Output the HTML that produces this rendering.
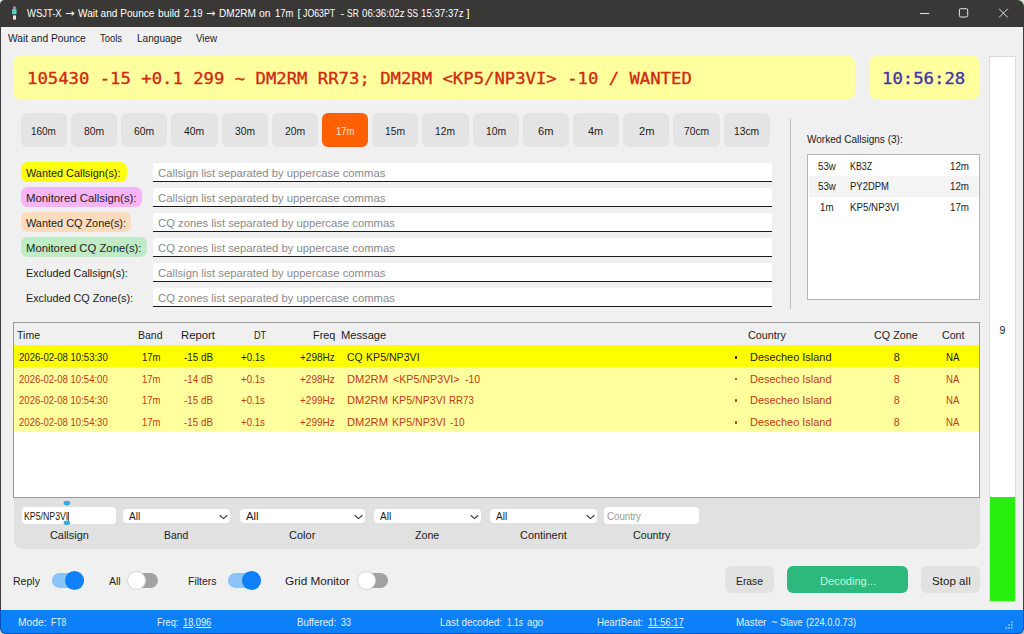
<!DOCTYPE html>
<html lang="en"><head><meta charset="utf-8"><title>WSJT-X Wait and Pounce</title>
<style>
html,body{margin:0;padding:0;}
body{width:1024px;height:634px;overflow:hidden;position:relative;background:#f0f0f0;font-family:"Liberation Sans",sans-serif;}
#w div,#w span,#w svg{position:absolute;}
#w span{white-space:pre;line-height:1;transform-origin:0 0;}
</style></head><body><div id="w">
<div style="left:0px;top:0px;width:1024px;height:26.5px;background:#3a3837;border-radius:0px;"></div>
<div style="left:0px;top:26px;width:1px;height:608px;background:#3f3d3c;border-radius:0px;"></div>
<div style="left:1023px;top:26px;width:1px;height:608px;background:#3f3d3c;border-radius:0px;"></div>
<svg style="left:10px;top:5px" width="10" height="17" viewBox="0 0 10 17"><rect x="3.3" y="1.6" width="2.4" height="2.4" rx="1" fill="#d8a8a0"/><rect x="2" y="4" width="4.6" height="5.2" rx="1" fill="#4fcfd0"/><rect x="3" y="10.2" width="3" height="4.6" rx="1.2" fill="#f4e4dc"/></svg>
<svg style="left:912px;top:0" width="112" height="26" viewBox="0 0 112 26" fill="none" stroke="#e4e4e4" stroke-width="1"><path d="M7.9 13.5h9.3"/><rect x="47.4" y="8.7" width="8.3" height="8.3" rx="1.3"/><path d="M87 8.7l8.8 8.8M95.8 8.7l-8.8 8.8"/></svg>
<svg style="left:1017px;top:0" width="7" height="7" viewBox="0 0 7 7"><path d="M0.5 0H7V6.5A6.5 6.5 0 0 0 0.5 0z" fill="#d3e9cd"/></svg>
<svg style="left:0;top:0" width="5" height="5" viewBox="0 0 5 5"><path d="M0 0H4.5A4.5 4.5 0 0 0 0 4.5z" fill="#e8e4e6"/></svg>
<div style="left:13px;top:56px;width:842px;height:43px;background:#ffff9e;border-radius:7px;"></div>
<div style="left:869px;top:56px;width:110.5px;height:43px;background:#ffff9e;border-radius:8px;"></div>
<div style="left:989px;top:56px;width:26.5px;height:545.5px;background:#ffffff;border-radius:0px;box-sizing:border-box;border:1px solid #dcdce0;"></div>
<div style="left:990px;top:496.6px;width:24.5px;height:104.4px;background:#2aee10;border-radius:0px;"></div>
<div style="left:20.75px;top:113.2px;width:46.2px;height:33.8px;background:#e4e4e4;border-radius:6px;"></div>
<div style="left:70.95px;top:113.2px;width:46.2px;height:33.8px;background:#e4e4e4;border-radius:6px;"></div>
<div style="left:121.15px;top:113.2px;width:46.2px;height:33.8px;background:#e4e4e4;border-radius:6px;"></div>
<div style="left:171.35px;top:113.2px;width:46.2px;height:33.8px;background:#e4e4e4;border-radius:6px;"></div>
<div style="left:221.55px;top:113.2px;width:46.2px;height:33.8px;background:#e4e4e4;border-radius:6px;"></div>
<div style="left:271.75px;top:113.2px;width:46.2px;height:33.8px;background:#e4e4e4;border-radius:6px;"></div>
<div style="left:321.95px;top:113.2px;width:46.2px;height:33.8px;background:#ff6002;border-radius:6px;"></div>
<div style="left:372.15px;top:113.2px;width:46.2px;height:33.8px;background:#e4e4e4;border-radius:6px;"></div>
<div style="left:422.35px;top:113.2px;width:46.2px;height:33.8px;background:#e4e4e4;border-radius:6px;"></div>
<div style="left:472.55px;top:113.2px;width:46.2px;height:33.8px;background:#e4e4e4;border-radius:6px;"></div>
<div style="left:522.75px;top:113.2px;width:46.2px;height:33.8px;background:#e4e4e4;border-radius:6px;"></div>
<div style="left:572.95px;top:113.2px;width:46.2px;height:33.8px;background:#e4e4e4;border-radius:6px;"></div>
<div style="left:623.15px;top:113.2px;width:46.2px;height:33.8px;background:#e4e4e4;border-radius:6px;"></div>
<div style="left:673.35px;top:113.2px;width:46.2px;height:33.8px;background:#e4e4e4;border-radius:6px;"></div>
<div style="left:723.55px;top:113.2px;width:46.2px;height:33.8px;background:#e4e4e4;border-radius:6px;"></div>
<div style="left:20.6px;top:162.2px;width:106.5px;height:19.8px;background:#ffff10;border-radius:6.5px;"></div>
<div style="left:152.5px;top:162.5px;width:619.5px;height:19.5px;background:#ffffff;border-radius:3px 3px 0 0;box-sizing:border-box;border-bottom:1.25px solid #1c1c1c;"></div>
<div style="left:20.6px;top:187.2px;width:121.5px;height:19.8px;background:#f8b4f8;border-radius:6.5px;"></div>
<div style="left:152.5px;top:187.5px;width:619.5px;height:19.5px;background:#ffffff;border-radius:3px 3px 0 0;box-sizing:border-box;border-bottom:1.25px solid #1c1c1c;"></div>
<div style="left:20.6px;top:212.2px;width:110.75px;height:19.8px;background:#fcdcbc;border-radius:6.5px;"></div>
<div style="left:152.5px;top:212.5px;width:619.5px;height:19.5px;background:#ffffff;border-radius:3px 3px 0 0;box-sizing:border-box;border-bottom:1.25px solid #1c1c1c;"></div>
<div style="left:20.6px;top:237.2px;width:126.25px;height:19.8px;background:#bfecc6;border-radius:6.5px;"></div>
<div style="left:152.5px;top:237.5px;width:619.5px;height:19.5px;background:#ffffff;border-radius:3px 3px 0 0;box-sizing:border-box;border-bottom:1.25px solid #1c1c1c;"></div>
<div style="left:152.5px;top:262.5px;width:619.5px;height:19.5px;background:#ffffff;border-radius:3px 3px 0 0;box-sizing:border-box;border-bottom:1.25px solid #1c1c1c;"></div>
<div style="left:152.5px;top:287.5px;width:619.5px;height:19.5px;background:#ffffff;border-radius:3px 3px 0 0;box-sizing:border-box;border-bottom:1.25px solid #1c1c1c;"></div>
<div style="left:789.5px;top:118.5px;width:1px;height:190px;background:#c0c0c0;border-radius:0px;"></div>
<div style="left:807px;top:154px;width:173px;height:145.5px;background:#ffffff;border-radius:0px;box-sizing:border-box;border:1px solid #b4b4b4;"></div>
<div style="left:809px;top:176.2px;width:169.5px;height:20.6px;background:#f4f4f4;border-radius:0px;"></div>
<div style="left:13px;top:321.5px;width:967px;height:176px;background:#ffffff;border-radius:0px;box-sizing:border-box;border:1px solid #9a9a9a;"></div>
<div style="left:14px;top:322.5px;width:965px;height:23px;background:#f0f0f0;border-radius:0px;"></div>
<div style="left:14px;top:345.25px;width:965px;height:22.0px;background:#ffff00;border-radius:0px;"></div>
<div style="left:734.9px;top:356.05px;width:2.6px;height:2.6px;background:#111;border-radius:0.9px;"></div>
<div style="left:14px;top:366.97px;width:965px;height:22.0px;background:#ffff9e;border-radius:0px;"></div>
<div style="left:734.9px;top:377.77000000000004px;width:2.6px;height:2.6px;background:#b03010;border-radius:0.9px;"></div>
<div style="left:14px;top:388.69px;width:965px;height:22.0px;background:#ffff9e;border-radius:0px;"></div>
<div style="left:734.9px;top:399.49px;width:2.6px;height:2.6px;background:#b03010;border-radius:0.9px;"></div>
<div style="left:14px;top:410.40999999999997px;width:965px;height:21.7px;background:#ffff9e;border-radius:0px;"></div>
<div style="left:734.9px;top:421.21px;width:2.6px;height:2.6px;background:#b03010;border-radius:0.9px;"></div>
<div style="left:13.5px;top:497.5px;width:966.5px;height:51.4px;background:#e1e1e1;border-radius:0 0 8px 8px;"></div>
<div style="left:21.8px;top:506.8px;width:94.3px;height:17.2px;background:#ffffff;border-radius:4px;"></div>
<div style="left:67.5px;top:511.6px;width:0.7px;height:9.2px;background:#555;border-radius:0px;"></div>
<svg style="left:61px;top:499px" width="11" height="28" viewBox="0 0 11 28"><ellipse cx="5.9" cy="4.1" rx="3.3" ry="2.3" fill="#36aedc"/><ellipse cx="5.9" cy="23.7" rx="3.3" ry="2.3" fill="#36aedc"/></svg>
<div style="left:123.25px;top:508.75px;width:106.75px;height:14.25px;background:#ffffff;border-radius:4px;"></div>
<svg style="left:219.0px;top:514px" width="9" height="6" viewBox="0 0 9 6" fill="none" stroke="#3a3a3a" stroke-width="1.15"><path d="M0.7 1.2l3.8 3.4L8.3 1.2"/></svg>
<div style="left:239.5px;top:508.75px;width:125.5px;height:14.25px;background:#ffffff;border-radius:4px;"></div>
<svg style="left:354.0px;top:514px" width="9" height="6" viewBox="0 0 9 6" fill="none" stroke="#3a3a3a" stroke-width="1.15"><path d="M0.7 1.2l3.8 3.4L8.3 1.2"/></svg>
<div style="left:374.25px;top:508.75px;width:106.5px;height:14.25px;background:#ffffff;border-radius:4px;"></div>
<svg style="left:469.75px;top:514px" width="9" height="6" viewBox="0 0 9 6" fill="none" stroke="#3a3a3a" stroke-width="1.15"><path d="M0.7 1.2l3.8 3.4L8.3 1.2"/></svg>
<div style="left:490px;top:508.75px;width:106.75px;height:14.25px;background:#ffffff;border-radius:4px;"></div>
<svg style="left:585.75px;top:514px" width="9" height="6" viewBox="0 0 9 6" fill="none" stroke="#3a3a3a" stroke-width="1.15"><path d="M0.7 1.2l3.8 3.4L8.3 1.2"/></svg>
<div style="left:603.75px;top:507px;width:95.25px;height:17px;background:#ffffff;border-radius:4px;"></div>
<div style="left:51.65px;top:573.1px;width:32.2px;height:14.6px;background:#8cc4fa;border-radius:7.3px;"></div>
<div style="left:65.15px;top:570.8px;width:18.8px;height:18.8px;background:#1080f6;border-radius:10px;"></div>
<div style="left:130px;top:572.7px;width:28px;height:15px;background:#a2a2a2;border-radius:7.5px;"></div>
<div style="left:127px;top:570.5px;width:19.2px;height:19.2px;background:#ffffff;border-radius:10px;box-sizing:border-box;border:1px solid #d6d6d6;"></div>
<div style="left:228.4px;top:573.1px;width:32.2px;height:14.6px;background:#8cc4fa;border-radius:7.3px;"></div>
<div style="left:241.9px;top:570.8px;width:18.8px;height:18.8px;background:#1080f6;border-radius:10px;"></div>
<div style="left:360px;top:572.7px;width:28px;height:15px;background:#a2a2a2;border-radius:7.5px;"></div>
<div style="left:357px;top:570.5px;width:19.2px;height:19.2px;background:#ffffff;border-radius:10px;box-sizing:border-box;border:1px solid #d6d6d6;"></div>
<div style="left:725.3px;top:566.2px;width:48.5px;height:26.8px;background:#e2e2e2;border-radius:6px;"></div>
<div style="left:786.8px;top:566.2px;width:121.2px;height:26.8px;background:#2db97d;border-radius:6px;"></div>
<div style="left:921px;top:566.2px;width:58.8px;height:26.8px;background:#e2e2e2;border-radius:6px;"></div>
<div style="left:0px;top:627px;width:8px;height:7px;background:#dcc8b4;border-radius:0px;"></div>
<div style="left:1016px;top:627px;width:8px;height:7px;background:#c8b49c;border-radius:0px;"></div>
<div style="left:0px;top:610px;width:1024px;height:23.6px;background:#0c80f8;border-radius:0 0 6px 6px;box-sizing:border-box;border-left:1px solid #0a52b4;border-right:1px solid #0a52b4;border-bottom:1.2px solid #0a4ca4;"></div>
<svg style="left:1004.6px;top:621.4px" width="10" height="10" viewBox="0 0 10 10" fill="#9ec8ff"><rect x="6" y="0.5" width="1.6" height="1.6"/><rect x="3.3" y="3.2" width="1.6" height="1.6"/><rect x="6" y="3.2" width="1.6" height="1.6"/><rect x="0.6" y="6" width="1.6" height="1.6"/><rect x="3.3" y="6" width="1.6" height="1.6"/><rect x="6" y="6" width="1.6" height="1.6"/></svg>
<span style="left:27.00px;top:8.10px;font-size:10.8px;color:#ffffff;transform:scaleX(0.8760);">WSJT-X</span>
<span style="left:65.00px;top:8.60px;font-size:10.8px;color:#ffffff;font-family:'DejaVu Sans', sans-serif;transform:scaleX(1.0556);">→</span>
<span style="left:77.70px;top:8.10px;font-size:10.8px;color:#ffffff;transform:scaleX(0.9338);">Wait and Pounce</span>
<span style="left:157.90px;top:8.10px;font-size:10.8px;color:#ffffff;transform:scaleX(0.9559);">build</span>
<span style="left:183.60px;top:8.10px;font-size:10.8px;color:#ffffff;transform:scaleX(0.8853);">2.19</span>
<span style="left:206.00px;top:8.60px;font-size:10.8px;color:#ffffff;font-family:'DejaVu Sans', sans-serif;transform:scaleX(1.0222);">→</span>
<span style="left:218.75px;top:8.10px;font-size:10.8px;color:#ffffff;transform:scaleX(0.9307);">DM2RM</span>
<span style="left:259.40px;top:8.10px;font-size:10.8px;color:#ffffff;transform:scaleX(0.9663);">on</span>
<span style="left:275.00px;top:8.10px;font-size:10.8px;color:#ffffff;transform:scaleX(0.8806);">17m</span>
<span style="left:297.60px;top:8.10px;font-size:10.8px;color:#ffffff;">[</span>
<span style="left:303.10px;top:8.10px;font-size:10.8px;color:#ffffff;transform:scaleX(0.8123);">JO63PT</span>
<span style="left:340.60px;top:8.10px;font-size:10.8px;color:#ffffff;">-</span>
<span style="left:346.90px;top:8.10px;font-size:10.8px;color:#ffffff;transform:scaleX(0.7828);">SR</span>
<span style="left:361.60px;top:8.10px;font-size:10.8px;color:#ffffff;transform:scaleX(0.8973);">06:36:02z</span>
<span style="left:407.00px;top:8.10px;font-size:10.8px;color:#ffffff;transform:scaleX(0.7675);">SS</span>
<span style="left:421.40px;top:8.10px;font-size:10.8px;color:#ffffff;transform:scaleX(0.8973);">15:37:37z</span>
<span style="left:466.60px;top:8.10px;font-size:10.8px;color:#ffffff;">]</span>
<span style="left:8.00px;top:32.60px;font-size:10.8px;color:#1b1b1b;transform:scaleX(0.9502);">Wait and Pounce</span>
<span style="left:100.00px;top:32.60px;font-size:10.8px;color:#1b1b1b;transform:scaleX(0.8719);">Tools</span>
<span style="left:137.00px;top:32.60px;font-size:10.8px;color:#1b1b1b;transform:scaleX(0.9317);">Language</span>
<span style="left:195.75px;top:32.60px;font-size:10.8px;color:#1b1b1b;transform:scaleX(0.9077);">View</span>
<span style="left:26.55px;top:71.50px;font-size:15px;color:#cf2a12;font-family:'DejaVu Sans Mono', 'Liberation Mono', monospace;transform:scaleX(1.1502);-webkit-text-stroke:0.3px #cf2a12;">105430 -15 +0.1 299 ~ DM2RM RR73; DM2RM &lt;KP5/NP3VI&gt; -10 / WANTED</span>
<span style="left:882.45px;top:71.80px;font-size:15px;color:#4034a8;font-family:'DejaVu Sans Mono', 'Liberation Mono', monospace;transform:scaleX(1.1514);-webkit-text-stroke:0.3px #4034a8;">10:56:28</span>
<span style="left:999.40px;top:324.50px;font-size:10.5px;color:#1b1b1b;">9</span>
<span style="left:31.40px;top:125.90px;font-size:11px;color:#1b1b1b;transform:scaleX(0.9030);">160m</span>
<span style="left:83.95px;top:125.90px;font-size:11px;color:#1b1b1b;transform:scaleX(0.9418);">80m</span>
<span style="left:134.15px;top:125.90px;font-size:11px;color:#1b1b1b;transform:scaleX(0.9418);">60m</span>
<span style="left:184.35px;top:125.90px;font-size:11px;color:#1b1b1b;transform:scaleX(0.9418);">40m</span>
<span style="left:234.65px;top:125.90px;font-size:11px;color:#1b1b1b;transform:scaleX(0.9324);">30m</span>
<span style="left:284.75px;top:125.90px;font-size:11px;color:#1b1b1b;transform:scaleX(0.9418);">20m</span>
<span style="left:335.75px;top:125.90px;font-size:11px;color:#ffecd8;transform:scaleX(0.8665);">17m</span>
<span style="left:385.25px;top:125.90px;font-size:11px;color:#1b1b1b;transform:scaleX(0.9324);">15m</span>
<span style="left:435.45px;top:125.90px;font-size:11px;color:#1b1b1b;transform:scaleX(0.9324);">12m</span>
<span style="left:485.55px;top:125.90px;font-size:11px;color:#1b1b1b;transform:scaleX(0.9418);">10m</span>
<span style="left:538.15px;top:125.90px;font-size:11px;color:#1b1b1b;transform:scaleX(1.0054);">6m</span>
<span style="left:588.45px;top:125.90px;font-size:11px;color:#1b1b1b;transform:scaleX(0.9922);">4m</span>
<span style="left:638.55px;top:125.90px;font-size:11px;color:#1b1b1b;transform:scaleX(1.0054);">2m</span>
<span style="left:683.85px;top:125.90px;font-size:11px;color:#1b1b1b;transform:scaleX(0.9351);">70cm</span>
<span style="left:734.05px;top:125.90px;font-size:11px;color:#1b1b1b;transform:scaleX(0.9351);">13cm</span>
<span style="left:26.25px;top:167.60px;font-size:10.8px;color:#1b1b1b;transform:scaleX(1.0074);">Wanted Callsign(s):</span>
<span style="left:157.50px;top:167.60px;font-size:10.8px;color:#8a8a8a;transform:scaleX(1.0466);">Callsign list separated by uppercase commas</span>
<span style="left:26.25px;top:192.60px;font-size:10.8px;color:#1b1b1b;transform:scaleX(1.0523);">Monitored Callsign(s):</span>
<span style="left:157.50px;top:192.60px;font-size:10.8px;color:#8a8a8a;transform:scaleX(1.0466);">Callsign list separated by uppercase commas</span>
<span style="left:26.25px;top:217.60px;font-size:10.8px;color:#1b1b1b;transform:scaleX(1.0080);">Wanted CQ Zone(s):</span>
<span style="left:157.50px;top:217.60px;font-size:10.8px;color:#8a8a8a;transform:scaleX(1.0442);">CQ zones list separated by uppercase commas</span>
<span style="left:26.25px;top:242.60px;font-size:10.8px;color:#1b1b1b;transform:scaleX(1.0462);">Monitored CQ Zone(s):</span>
<span style="left:157.50px;top:242.60px;font-size:10.8px;color:#8a8a8a;transform:scaleX(1.0442);">CQ zones list separated by uppercase commas</span>
<span style="left:26.25px;top:267.60px;font-size:10.8px;color:#1b1b1b;transform:scaleX(1.0033);">Excluded Callsign(s):</span>
<span style="left:157.50px;top:267.60px;font-size:10.8px;color:#8a8a8a;transform:scaleX(1.0466);">Callsign list separated by uppercase commas</span>
<span style="left:26.25px;top:292.60px;font-size:10.8px;color:#1b1b1b;transform:scaleX(1.0018);">Excluded CQ Zone(s):</span>
<span style="left:157.50px;top:292.60px;font-size:10.8px;color:#8a8a8a;transform:scaleX(1.0442);">CQ zones list separated by uppercase commas</span>
<span style="left:807.10px;top:133.80px;font-size:10.8px;color:#1b1b1b;transform:scaleX(0.9291);">Worked Callsigns (3):</span>
<span style="left:818.10px;top:160.65px;font-size:10.7px;color:#1b1b1b;transform:scaleX(0.9051);">53w</span>
<span style="left:849.70px;top:160.65px;font-size:10.7px;color:#1b1b1b;transform:scaleX(0.8272);">KB3Z</span>
<span style="left:950.30px;top:160.65px;font-size:10.7px;color:#1b1b1b;transform:scaleX(0.9144);">12m</span>
<span style="left:818.10px;top:181.25px;font-size:10.7px;color:#1b1b1b;transform:scaleX(0.9051);">53w</span>
<span style="left:849.70px;top:181.25px;font-size:10.7px;color:#1b1b1b;transform:scaleX(0.8877);">PY2DPM</span>
<span style="left:950.30px;top:181.25px;font-size:10.7px;color:#1b1b1b;transform:scaleX(0.9144);">12m</span>
<span style="left:820.30px;top:201.95px;font-size:10.7px;color:#1b1b1b;transform:scaleX(0.9101);">1m</span>
<span style="left:849.70px;top:201.95px;font-size:10.7px;color:#1b1b1b;transform:scaleX(0.9117);">KP5/NP3VI</span>
<span style="left:950.30px;top:201.95px;font-size:10.7px;color:#1b1b1b;transform:scaleX(0.9144);">17m</span>
<span style="left:17.00px;top:329.80px;font-size:10.8px;color:#1b1b1b;transform:scaleX(0.9751);">Time</span>
<span style="left:138.00px;top:329.80px;font-size:10.8px;color:#1b1b1b;transform:scaleX(0.9718);">Band</span>
<span style="left:180.50px;top:329.80px;font-size:10.8px;color:#1b1b1b;transform:scaleX(1.0492);">Report</span>
<span style="left:253.75px;top:329.80px;font-size:10.8px;color:#1b1b1b;transform:scaleX(0.8448);">DT</span>
<span style="left:313.00px;top:329.80px;font-size:10.8px;color:#1b1b1b;transform:scaleX(1.0047);">Freq</span>
<span style="left:341.25px;top:329.80px;font-size:10.8px;color:#1b1b1b;transform:scaleX(1.0330);">Message</span>
<span style="left:748.40px;top:329.80px;font-size:10.8px;color:#1b1b1b;transform:scaleX(0.9998);">Country</span>
<span style="left:874.30px;top:329.80px;font-size:10.8px;color:#1b1b1b;transform:scaleX(0.9977);">CQ Zone</span>
<span style="left:941.50px;top:329.80px;font-size:10.8px;color:#1b1b1b;transform:scaleX(0.9866);">Cont</span>
<span style="left:18.75px;top:351.60px;font-size:10.8px;color:#1b1b1b;transform:scaleX(0.8853);">2026-02-08 10:53:30</span>
<span style="left:142.00px;top:351.60px;font-size:10.8px;color:#1b1b1b;transform:scaleX(0.8806);">17m</span>
<span style="left:183.75px;top:351.60px;font-size:10.8px;color:#1b1b1b;transform:scaleX(0.9095);">-15 dB</span>
<span style="left:240.60px;top:351.60px;font-size:10.8px;color:#1b1b1b;transform:scaleX(0.8933);">+0.1s</span>
<span style="left:300.00px;top:351.60px;font-size:10.8px;color:#1b1b1b;transform:scaleX(0.9268);">+298Hz</span>
<span style="left:346.60px;top:351.60px;font-size:10.8px;color:#1b1b1b;transform:scaleX(0.9559);">CQ</span>
<span style="left:366.10px;top:351.60px;font-size:10.8px;color:#1b1b1b;transform:scaleX(0.9811);">KP5/NP3VI</span>
<span style="left:750.00px;top:351.60px;font-size:10.8px;color:#1b1b1b;transform:scaleX(1.0134);">Desecheo Island</span>
<span style="left:893.80px;top:351.60px;font-size:10.8px;color:#1b1b1b;">8</span>
<span style="left:945.50px;top:351.60px;font-size:10.8px;color:#1b1b1b;transform:scaleX(0.8926);">NA</span>
<span style="left:18.75px;top:373.60px;font-size:10.8px;color:#c43a12;transform:scaleX(0.8853);">2026-02-08 10:54:00</span>
<span style="left:142.00px;top:373.60px;font-size:10.8px;color:#c43a12;transform:scaleX(0.8806);">17m</span>
<span style="left:183.75px;top:373.60px;font-size:10.8px;color:#c43a12;transform:scaleX(0.9095);">-14 dB</span>
<span style="left:240.60px;top:373.60px;font-size:10.8px;color:#c43a12;transform:scaleX(0.8933);">+0.1s</span>
<span style="left:300.00px;top:373.60px;font-size:10.8px;color:#c43a12;transform:scaleX(0.9268);">+298Hz</span>
<span style="left:346.60px;top:373.60px;font-size:10.8px;color:#c43a12;transform:scaleX(1.0355);">DM2RM</span>
<span style="left:392.70px;top:373.60px;font-size:10.8px;color:#c43a12;transform:scaleX(0.9893);">&lt;KP5/NP3VI&gt;</span>
<span style="left:464.50px;top:373.60px;font-size:10.8px;color:#c43a12;transform:scaleX(0.9743);">-10</span>
<span style="left:750.00px;top:373.60px;font-size:10.8px;color:#c43a12;transform:scaleX(1.0134);">Desecheo Island</span>
<span style="left:893.80px;top:373.60px;font-size:10.8px;color:#c43a12;">8</span>
<span style="left:945.50px;top:373.60px;font-size:10.8px;color:#c43a12;transform:scaleX(0.8926);">NA</span>
<span style="left:18.75px;top:395.00px;font-size:10.8px;color:#c43a12;transform:scaleX(0.8853);">2026-02-08 10:54:30</span>
<span style="left:142.00px;top:395.00px;font-size:10.8px;color:#c43a12;transform:scaleX(0.8806);">17m</span>
<span style="left:183.75px;top:395.00px;font-size:10.8px;color:#c43a12;transform:scaleX(0.9095);">-15 dB</span>
<span style="left:240.60px;top:395.00px;font-size:10.8px;color:#c43a12;transform:scaleX(0.8933);">+0.1s</span>
<span style="left:300.00px;top:395.00px;font-size:10.8px;color:#c43a12;transform:scaleX(0.9268);">+299Hz</span>
<span style="left:346.60px;top:395.00px;font-size:10.8px;color:#c43a12;transform:scaleX(1.0355);">DM2RM</span>
<span style="left:391.60px;top:395.00px;font-size:10.8px;color:#c43a12;transform:scaleX(0.9830);">KP5/NP3VI</span>
<span style="left:448.70px;top:395.00px;font-size:10.8px;color:#c43a12;transform:scaleX(0.9022);">RR73</span>
<span style="left:750.00px;top:395.00px;font-size:10.8px;color:#c43a12;transform:scaleX(1.0134);">Desecheo Island</span>
<span style="left:893.80px;top:395.00px;font-size:10.8px;color:#c43a12;">8</span>
<span style="left:945.50px;top:395.00px;font-size:10.8px;color:#c43a12;transform:scaleX(0.8926);">NA</span>
<span style="left:18.75px;top:416.80px;font-size:10.8px;color:#c43a12;transform:scaleX(0.8853);">2026-02-08 10:54:30</span>
<span style="left:142.00px;top:416.80px;font-size:10.8px;color:#c43a12;transform:scaleX(0.8806);">17m</span>
<span style="left:183.75px;top:416.80px;font-size:10.8px;color:#c43a12;transform:scaleX(0.9095);">-15 dB</span>
<span style="left:240.60px;top:416.80px;font-size:10.8px;color:#c43a12;transform:scaleX(0.8933);">+0.1s</span>
<span style="left:300.00px;top:416.80px;font-size:10.8px;color:#c43a12;transform:scaleX(0.9268);">+299Hz</span>
<span style="left:346.60px;top:416.80px;font-size:10.8px;color:#c43a12;transform:scaleX(1.0355);">DM2RM</span>
<span style="left:391.60px;top:416.80px;font-size:10.8px;color:#c43a12;transform:scaleX(0.9830);">KP5/NP3VI</span>
<span style="left:449.90px;top:416.80px;font-size:10.8px;color:#c43a12;transform:scaleX(0.9295);">-10</span>
<span style="left:750.00px;top:416.80px;font-size:10.8px;color:#c43a12;transform:scaleX(1.0134);">Desecheo Island</span>
<span style="left:893.80px;top:416.80px;font-size:10.8px;color:#c43a12;">8</span>
<span style="left:945.50px;top:416.80px;font-size:10.8px;color:#c43a12;transform:scaleX(0.8926);">NA</span>
<span style="left:23.75px;top:510.75px;font-size:10.7px;color:#1b1b1b;transform:scaleX(0.8194);">KP5/NP3VI</span>
<span style="left:129.25px;top:510.75px;font-size:10.7px;color:#1b1b1b;transform:scaleX(0.9345);">All</span>
<span style="left:245.50px;top:509.80px;font-size:11.6px;color:#1b1b1b;transform:scaleX(0.9749);">All</span>
<span style="left:380.25px;top:510.75px;font-size:10.7px;color:#1b1b1b;transform:scaleX(0.9345);">All</span>
<span style="left:496.00px;top:510.75px;font-size:10.7px;color:#1b1b1b;transform:scaleX(0.9345);">All</span>
<span style="left:606.75px;top:510.75px;font-size:10.7px;color:#9a9a9a;transform:scaleX(0.9060);">Country</span>
<span style="left:49.53px;top:529.70px;font-size:10.8px;color:#1b1b1b;transform:scaleX(1.0091);">Callsign</span>
<span style="left:163.78px;top:529.70px;font-size:10.8px;color:#1b1b1b;transform:scaleX(0.9619);">Band</span>
<span style="left:288.73px;top:529.70px;font-size:10.8px;color:#1b1b1b;transform:scaleX(1.0208);">Color</span>
<span style="left:414.98px;top:529.70px;font-size:10.8px;color:#1b1b1b;transform:scaleX(0.9856);">Zone</span>
<span style="left:520.02px;top:529.70px;font-size:10.8px;color:#1b1b1b;transform:scaleX(1.0115);">Continent</span>
<span style="left:632.50px;top:529.70px;font-size:10.8px;color:#1b1b1b;transform:scaleX(0.9894);">Country</span>
<span style="left:13.00px;top:575.60px;font-size:10.8px;color:#1b1b1b;transform:scaleX(0.9750);">Reply</span>
<span style="left:108.75px;top:575.60px;font-size:10.8px;color:#1b1b1b;transform:scaleX(0.9698);">All</span>
<span style="left:188.00px;top:575.60px;font-size:10.8px;color:#1b1b1b;transform:scaleX(0.9669);">Filters</span>
<span style="left:285.00px;top:575.60px;font-size:10.8px;color:#1b1b1b;transform:scaleX(1.0869);">Grid Monitor</span>
<span style="left:736.00px;top:575.80px;font-size:10.8px;color:#1b1b1b;transform:scaleX(0.9574);">Erase</span>
<span style="left:819.50px;top:575.80px;font-size:10.8px;color:#c8f6de;transform:scaleX(1.0253);">Decoding...</span>
<span style="left:931.50px;top:575.80px;font-size:10.8px;color:#1b1b1b;transform:scaleX(1.0754);">Stop all</span>
<span style="left:18.10px;top:616.60px;font-size:10.8px;color:#e4f0ff;transform:scaleX(0.9531);">Mode:</span>
<span style="left:50.80px;top:616.60px;font-size:10.8px;color:#e4f0ff;transform:scaleX(0.7921);">FT8</span>
<span style="left:157.20px;top:616.60px;font-size:10.8px;color:#e4f0ff;transform:scaleX(0.8433);">Freq:</span>
<span style="left:183.10px;top:616.60px;font-size:10.8px;color:#e4f0ff;transform:scaleX(0.8556);text-decoration:underline;">18,096</span>
<span style="left:296.70px;top:616.60px;font-size:10.8px;color:#e4f0ff;transform:scaleX(0.8964);">Buffered:</span>
<span style="left:341.30px;top:616.60px;font-size:10.8px;color:#e4f0ff;transform:scaleX(0.8247);">33</span>
<span style="left:440.40px;top:616.60px;font-size:10.8px;color:#e4f0ff;transform:scaleX(0.9155);">Last decoded:</span>
<span style="left:507.10px;top:616.60px;font-size:10.8px;color:#e4f0ff;transform:scaleX(0.7806);">1.1s</span>
<span style="left:527.00px;top:616.60px;font-size:10.8px;color:#e4f0ff;transform:scaleX(0.8995);">ago</span>
<span style="left:597.20px;top:616.60px;font-size:10.8px;color:#e4f0ff;transform:scaleX(0.8961);">HeartBeat:</span>
<span style="left:648.10px;top:616.60px;font-size:10.8px;color:#e4f0ff;transform:scaleX(0.8648);text-decoration:underline;">11:56:17</span>
<span style="left:735.50px;top:616.60px;font-size:10.8px;color:#e4f0ff;transform:scaleX(0.9191);">Master</span>
<span style="left:770.70px;top:616.60px;font-size:10.8px;color:#e4f0ff;transform:scaleX(1.0333);">~</span>
<span style="left:780.10px;top:616.60px;font-size:10.8px;color:#e4f0ff;transform:scaleX(0.8369);">Slave</span>
<span style="left:805.90px;top:616.60px;font-size:10.8px;color:#e4f0ff;transform:scaleX(0.8590);">(224.0.0.73)</span>
</div></body></html>
